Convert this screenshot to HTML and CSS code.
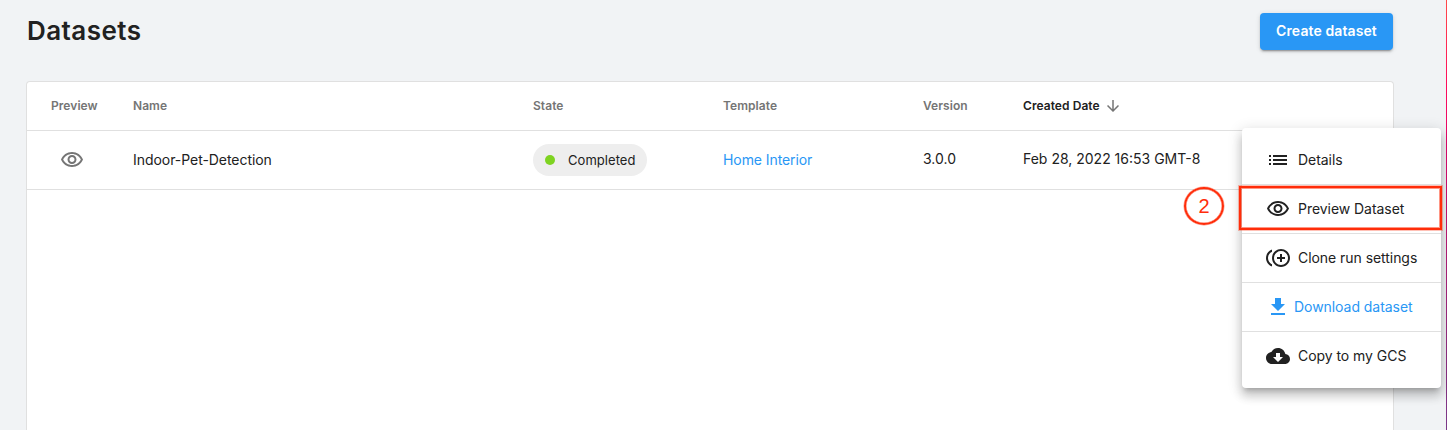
FILE: index.html
```html
<!DOCTYPE html>
<html lang="en">
<head>
<meta charset="utf-8">
<title>Datasets</title>
<link rel="stylesheet" href="styles.css">
</head>
<body>
<main class="page">
  <header class="page-header">
    <h1 class="title">Datasets</h1>
    <button class="create" type="button">Create dataset</button>
  </header>
  <section class="card">
    <div class="row head">
      <span>Preview</span>
      <span>Name</span>
      <span>State</span>
      <span>Template</span>
      <span>Version</span>
      <span class="sorted">Created Date
        <svg class="sort-icon" viewBox="0 0 24 24"><path d="M20 12l-1.41-1.41L13 16.17V4h-2v12.17l-5.58-5.59L4 12l8 8 8-8z"/></svg>
      </span>
    </div>
    <div class="row data">
      <span class="preview"><svg class="icon" viewBox="0 0 24 24"><path d="M12 6c3.79 0 7.17 2.13 8.82 5.5C19.17 14.87 15.79 17 12 17s-7.17-2.13-8.82-5.5C4.83 8.13 8.21 6 12 6m0-2C7 4 2.73 7.11 1 11.5 2.73 15.89 7 19 12 19s9.27-3.11 11-7.5C21.27 7.11 17 4 12 4zm0 5c1.38 0 2.5 1.12 2.5 2.5S13.38 14 12 14s-2.5-1.12-2.5-2.5S10.62 9 12 9m0-2c-2.48 0-4.5 2.02-4.5 4.5S9.52 16 12 16s4.5-2.02 4.5-4.5S14.48 7 12 7z"/></svg></span>
      <span class="name">Indoor-Pet-Detection</span>
      <span class="chip"><i class="dot"></i><span class="chip-label">Completed</span></span>
      <a class="link">Home Interior</a>
      <span class="version">3.0.0</span>
      <span class="date">Feb 28, 2022 16:53 GMT-8</span>
    </div>
  </section>
</main>
<div class="edge"></div>
<nav class="menu">
  <a class="item"><svg class="icon" viewBox="0 0 24 24"><path d="M3 13h2v-2H3v2zm0 4h2v-2H3v2zm0-8h2V7H3v2zm4 4h14v-2H7v2zm0 4h14v-2H7v2zM7 7v2h14V7H7z"/></svg><span>Details</span></a>
  <a class="item"><svg class="icon" viewBox="0 0 24 24"><path d="M12 6c3.79 0 7.17 2.13 8.82 5.5C19.17 14.87 15.79 17 12 17s-7.17-2.13-8.82-5.5C4.83 8.13 8.21 6 12 6m0-2C7 4 2.73 7.11 1 11.5 2.73 15.89 7 19 12 19s9.27-3.11 11-7.5C21.27 7.11 17 4 12 4zm0 5c1.38 0 2.5 1.12 2.5 2.5S13.38 14 12 14s-2.5-1.12-2.5-2.5S10.62 9 12 9m0-2c-2.48 0-4.5 2.02-4.5 4.5S9.52 16 12 16s4.5-2.02 4.5-4.5S14.48 7 12 7z"/></svg><span>Preview Dataset</span></a>
  <a class="item"><svg class="icon" viewBox="0 0 24 24"><path d="M16 8h-2v3h-3v2h3v3h2v-3h3v-2h-3zM2 12c0-2.79 1.64-5.2 4.01-6.32V3.52C2.52 4.76 0 8.09 0 12s2.52 7.24 6.01 8.48v-2.16C3.64 17.2 2 14.79 2 12zm13-9c-4.96 0-9 4.04-9 9s4.04 9 9 9 9-4.04 9-9-4.04-9-9-9zm0 16c-3.86 0-7-3.14-7-7s3.14-7 7-7 7 3.14 7 7-3.14 7-7 7z"/></svg><span>Clone run settings</span></a>
  <a class="item download"><svg class="icon" viewBox="0 0 24 24"><path d="M19 9h-4V3H9v6H5l7 7 7-7zM5 18v2h14v-2H5z"/></svg><span>Download dataset</span></a>
  <a class="item"><svg class="icon" viewBox="0 0 24 24"><path d="M19.35 10.04C18.67 6.59 15.64 4 12 4 9.11 4 6.6 5.64 5.35 8.04 2.34 8.36 0 10.91 0 14c0 3.31 2.69 6 6 6h13c2.76 0 5-2.24 5-5 0-2.64-2.05-4.78-4.65-4.96zM17 13l-5 5-5-5h3V9h4v4h3z"/></svg><span>Copy to my GCS</span></a>
</nav>
<div class="highlight"></div>
<div class="step">2</div>
</body>
</html>
```
FILE: styles.css
```css
* { box-sizing: border-box; }
body {
  margin: 0;
  height: 430px;
  overflow: hidden;
  position: relative;
  background: #f1f3f5;
  color: #212121;
  font-family: Inter, "Liberation Sans", sans-serif;
  font-size: 14px;
}
.page {
  height: 430px;
  padding: 13px 53px 0 26px;
  display: flex;
  flex-direction: column;
}
.page-header {
  display: flex;
  justify-content: space-between;
  height: 68px;
  flex: none;
  padding: 0 1px;
}
.title {
  margin: 0;
  font-size: 26px;
  line-height: 36px;
  font-weight: 600;
  letter-spacing: 0.45px;
}
.create {
  width: 133px;
  height: 37px;
  padding: 0 0 1px;
  border: 0;
  border-radius: 4px;
  background: #2997f5;
  color: #fff;
  font: 600 14px/36px Inter, "Liberation Sans", sans-serif;
  letter-spacing: 0.1px;
  box-shadow: 0 3px 1px -2px rgba(0,0,0,.2), 0 2px 2px 0 rgba(0,0,0,.14), 0 1px 5px 0 rgba(0,0,0,.12);
}
.card {
  flex: 1;
  background: #fff;
  border: 1px solid #e0e0e0;
  border-bottom: 0;
  border-radius: 4px 4px 0 0;
}
.row {
  display: grid;
  grid-template-columns: 82px 400px 190px 200px 100px 1fr;
  align-items: center;
  padding-left: 24px;
  border-bottom: 1px solid #e0e0e0;
}
.head {
  height: 49px;
  padding-bottom: 1px;
  color: #757575;
  font-size: 12px;
  font-weight: 600;
  letter-spacing: 0.06px;
}
.sorted {
  display: flex;
  align-items: center;
  gap: 4px;
  color: #212121;
}
.sort-icon { width: 18px; height: 18px; fill: #757575; }
.data { height: 59px; letter-spacing: -0.05px; }
.icon { display: block; width: 24px; height: 24px; fill: #212121; flex: none; }
.preview { padding-left: 9px; }
.preview .icon { fill: #757575; }
.name, .link { padding-bottom: 1px; }
.chip {
  display: flex;
  align-items: center;
  gap: 13px;
  width: 114px;
  height: 32px;
  padding-left: 12px;
  border-radius: 16px;
  background: #eee;
  font-size: 13px;
  letter-spacing: 0.05px;
}
.chip-label { padding-bottom: 1px; }
.dot { width: 10px; height: 10px; border-radius: 50%; background: #7ed321; }
.link { color: #2997f5; letter-spacing: -0.08px; }
.version, .date { padding-bottom: 3px; letter-spacing: 0; }
.edge {
  position: absolute;
  right: 0;
  top: 0;
  width: 1px;
  height: 430px;
  background: linear-gradient(#ff4a4a, #ff0a5c 20%, #e0086c 35%, #9b2a80 75%, #7a3888);
}
.menu {
  position: absolute;
  left: 1242px;
  top: 128px;
  width: 199px;
  padding: 8px 0;
  border-radius: 4px;
  background: #fff;
  box-shadow: 0 5px 5px -3px rgba(0,0,0,.2), 0 8px 10px 1px rgba(0,0,0,.14), 0 3px 14px 2px rgba(0,0,0,.12);
}
.item {
  display: flex;
  align-items: center;
  gap: 8px;
  height: 49px;
  padding-left: 24px;
  border-bottom: 1px solid #e0e0e0;
  letter-spacing: -0.05px;
}
.item span { padding-bottom: 2px; }
.item:last-child { height: 48px; border-bottom: 0; }
.download { gap: 4px; color: #2997f5; }
.download .icon { fill: #2997f5; }
.highlight {
  position: absolute;
  left: 1239px;
  top: 186px;
  width: 203px;
  height: 44px;
  border: 2px solid #ff2d0a;
  box-shadow: 0 0 0 1px rgba(255,45,10,.3), inset 0 0 0 1px rgba(255,45,10,.5);
}
.step {
  position: absolute;
  left: 1184px;
  top: 187px;
  width: 40px;
  height: 38px;
  border: 2px solid #ff2d0a;
  border-radius: 50%;
  box-shadow: 0 0 0 0.5px rgba(255,45,10,.5), inset 0 0 0 0.5px rgba(255,45,10,.6);
  color: #ff2d0a;
  font: 20px/35px "Liberation Sans", sans-serif;
  text-align: center;
}
```
